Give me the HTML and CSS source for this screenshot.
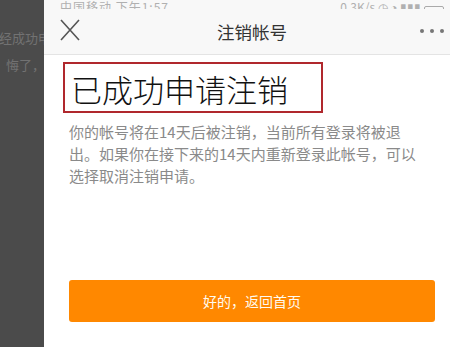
FILE: index.html
```html
<!DOCTYPE html>
<html lang="zh-CN">
<head>
    <meta charset="UTF-8">
    <meta name="viewport" content="width=device-width, initial-scale=1.0">
    <title>注销帐号</title>
    <link rel="stylesheet" href="styles.css">
</head>
<body>
    <div class="backdrop">
        <p class="backdrop-line first">经成功申</p>
        <p class="backdrop-line second">悔了，</p>
    </div>
    <div class="panel">
        <div class="status">
            <span class="status-left">中国移动 下午1:57</span>
            <span class="status-right">0.3K/s ◷ ◔ ▮▮▮ <span class="battery"></span></span>
        </div>
        <div class="navbar">
            <svg class="close" width="20" height="22" viewBox="0 0 20 22">
                <path d="M1 1 L19 21 M19 1 L1 21" stroke="#555" stroke-width="1.6" fill="none"/>
            </svg>
            <h1 class="nav-title">注销帐号</h1>
            <div class="more">
                <span class="dot"></span><span class="dot"></span><span class="dot"></span>
            </div>
        </div>
        <div class="content">
            <h2 class="done-title">已成功申请注销</h2>
            <p class="desc">你的帐号将在14天后被注销，当前所有登录将被退出。如果你在接下来的14天内重新登录此帐号，可以选择取消注销申请。</p>
            <button class="btn">好的，返回首页</button>
        </div>
    </div>
</body>
</html>
```

FILE: styles.css
```css
* {
    margin: 0;
    padding: 0;
    box-sizing: border-box;
}
body {
    font-family: "Noto Sans CJK SC", "Noto Sans", sans-serif;
    width: 450px;
    height: 347px;
    overflow: hidden;
    display: flex;
    background: #fff;
}
.backdrop {
    width: 44px;
    flex-shrink: 0;
    background: #4b4b4b;
    overflow: hidden;
    white-space: nowrap;
}
.backdrop-line {
    font-size: 13px;
    color: #727272;
    line-height: 18px;
}
.backdrop-line.first {
    margin-top: 29px;
    margin-left: -1px;
}
.backdrop-line.second {
    margin-top: 9px;
    margin-left: 6px;
}
.panel {
    flex: 1;
    background: #fff;
    display: flex;
    flex-direction: column;
}
.status {
    height: 9px;
    overflow: hidden;
    background: #f8f8f8;
    display: flex;
    justify-content: space-between;
    align-items: flex-end;
    padding: 0 6px 0 16px;
    font-size: 12px;
    color: #b0b0b0;
    line-height: 16px;
}
.status span {
    margin-bottom: -6px;
}
.status-left {
    letter-spacing: 1px;
}
.battery {
    display: inline-block;
    width: 20px;
    height: 12px;
    border: 1px solid #aaa;
    border-radius: 2px;
    vertical-align: middle;
}
.navbar {
    height: 46px;
    background: #f8f8f8;
    border-bottom: 1px solid #e4e4e4;
    display: flex;
    align-items: center;
    padding: 0 6px 0 16px;
    position: relative;
}
.close {
    margin-top: -4px;
}
.nav-title {
    position: absolute;
    left: 0;
    right: -10px;
    top: 12px;
    text-align: center;
    font-size: 17.5px;
    font-weight: normal;
    color: #333;
    line-height: 22px;
    pointer-events: none;
}
.more {
    margin-left: auto;
    display: flex;
    gap: 6px;
    margin-top: -2px;
}
.dot {
    width: 4px;
    height: 4px;
    border-radius: 50%;
    background: #777;
}
.content {
    padding: 7px 15px 0 19px;
}
.done-title {
    display: inline-block;
    width: 260px;
    height: 51px;
    border: 2px solid #b0282d;
    font-size: 31px;
    font-weight: 300;
    color: #111;
    line-height: 40px;
    padding: 5px 0 0 6px;
    white-space: nowrap;
}
.desc {
    width: 358px;
    margin: 8px 0 0 6px;
    font-size: 15px;
    line-height: 22px;
    color: #8a8a8a;
}
.btn {
    display: block;
    width: 366px;
    height: 42px;
    margin: 93px 0 0 6px;
    background: #ff8800;
    border: none;
    border-radius: 3px;
    color: #fffbf0;
    font-family: inherit;
    font-size: 14px;
}
```
